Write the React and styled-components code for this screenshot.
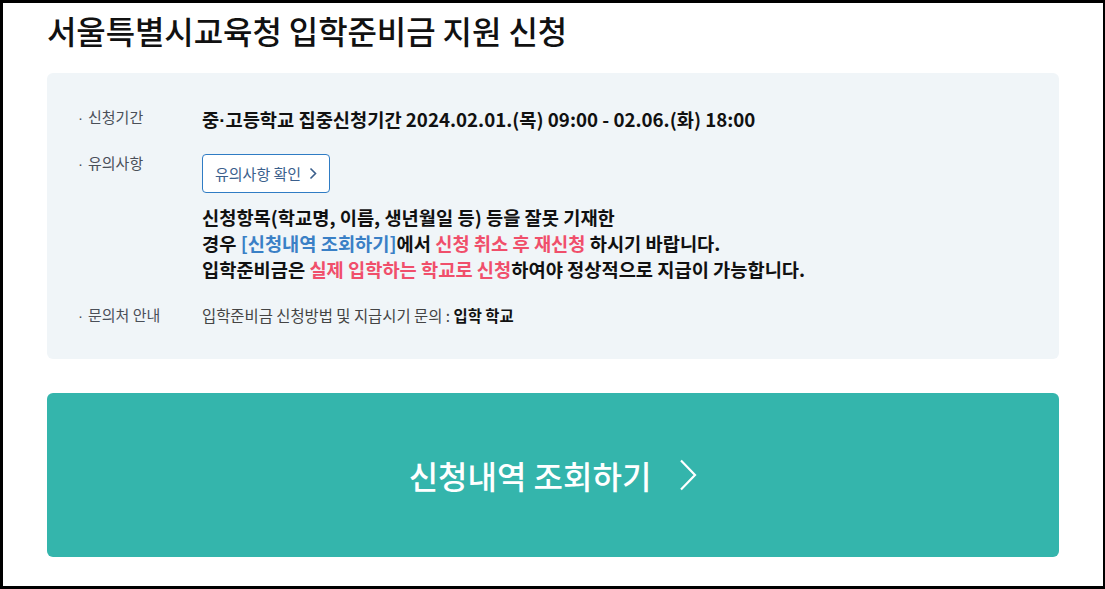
import React from "react";
import styled, { createGlobalStyle } from "styled-components";

const GlobalStyle = createGlobalStyle`
  * {
    box-sizing: border-box;
  }
  html, body {
    margin: 0;
    padding: 0;
    background: #fff;
  }
  body {
    font-family: "Noto Sans CJK KR", "Noto Sans", sans-serif;
    color: #111;
  }
`;

const rows = [
  { label: "신청기간", type: "period" },
  { label: "유의사항", type: "notice" },
  { label: "문의처 안내", type: "contact" },
];

const ChevronSmall = () => (
  <svg width="8" height="13" viewBox="0 0 8 13" fill="none">
    <polyline points="1.5,1.5 6.5,6.5 1.5,11.5" stroke="currentColor" strokeWidth="1.6" />
  </svg>
);

const ChevronLarge = () => (
  <svg width="18" height="32" viewBox="0 0 18 32" fill="none">
    <polyline points="2,1.5 16,16 2,30.5" stroke="#fff" strokeWidth="2.2" />
  </svg>
);

const renderValue = (type) => {
  if (type === "period") {
    return (
      <PeriodText>
        중<Dot>·</Dot>고등학교 집중신청기간 2024.02.01.(목) 09:00 - 02.06.(화) 18:00
      </PeriodText>
    );
  }
  if (type === "notice") {
    return (
      <>
        <NoticeButton type="button">
          유의사항 확인
          <ChevronSmall />
        </NoticeButton>
        <NoticeText>
          신청항목(학교명, 이름, 생년월일 등) 등을 잘못 기재한
          <br />
          경우 <Accent $tone="blue">[신청내역 조회하기]</Accent>에서{" "}
          <Accent $tone="red">신청 취소 후 재신청</Accent> 하시기 바랍니다.
          <br />
          입학준비금은 <Accent $tone="red">실제 입학하는 학교로 신청</Accent>하여야 정상적으로 지급이 가능합니다.
        </NoticeText>
      </>
    );
  }
  return (
    <ContactText>
      입학준비금 신청방법 및 지급시기 문의 : <strong>입학 학교</strong>
    </ContactText>
  );
};

export default function App() {
  return (
    <>
      <GlobalStyle />
      <Frame>
        <Title>서울특별시교육청 입학준비금 지원 신청</Title>
        <InfoPanel>
          {rows.map((row) => (
            <InfoRow key={row.label} $type={row.type}>
              <Label $type={row.type}>{row.label}</Label>
              <Value>{renderValue(row.type)}</Value>
            </InfoRow>
          ))}
        </InfoPanel>
        <LookupButton type="button">
          <span>신청내역 조회하기</span>
          <ChevronLarge />
        </LookupButton>
      </Frame>
    </>
  );
}

const Frame = styled.div`
  width: 1105px;
  height: 589px;
  border: 3px solid #000;
  border-right-width: 2px;
  padding: 7px 44px 0 44px;
  display: flex;
  flex-direction: column;
  overflow: hidden;
`;

const Title = styled.h1`
  margin: 0 0 23px;
  font-size: 32px;
  line-height: 40px;
  font-weight: 500;
  color: #111;
  letter-spacing: -0.1px;
`;

const InfoPanel = styled.div`
  background: #f0f5f8;
  border-radius: 6px;
  padding: 33px 30px 34px 31px;
  display: flex;
  flex-direction: column;
  gap: 22px;
`;

const InfoRow = styled.div`
  display: grid;
  grid-template-columns: 124px 1fr;
  align-items: start;
  padding-top: ${(p) => (p.$type === "contact" ? "2px" : "0")};
`;

const Label = styled.div`
  font-size: 15px;
  line-height: 18px;
  color: #4a4f58;
  padding-top: ${(p) => (p.$type === "period" ? "2px" : "0")};

  &::before {
    content: "·";
    font-family: "Liberation Sans", sans-serif;
    margin-right: 5px;
  }
`;

const Value = styled.div`
  display: flex;
  flex-direction: column;
  align-items: flex-start;
`;

const Dot = styled.span`
  font-family: "Liberation Sans", sans-serif;
  line-height: 1;
`;

const PeriodText = styled.div`
  height: 26px;
  font-size: 18.7px;
  line-height: 26px;
  font-weight: 700;
  color: #111;
`;

const NoticeButton = styled.button`
  display: inline-flex;
  align-items: center;
  gap: 8px;
  height: 39px;
  padding: 0 12px;
  background: #fff;
  border: 1px solid #2f7cc4;
  border-radius: 4px;
  font-family: inherit;
  font-size: 15px;
  color: #3b5f8c;
  cursor: pointer;
`;

const NoticeText = styled.p`
  margin: 11px 0 0;
  font-size: 18.7px;
  line-height: 26px;
  font-weight: 700;
  color: #111;
`;

const Accent = styled.span`
  color: ${(p) => (p.$tone === "blue" ? "#3a80c6" : "#f04f6b")};
`;

const ContactText = styled.div`
  font-size: 15.4px;
  line-height: 18px;
  color: #444;

  strong {
    color: #111;
    font-weight: 700;
  }
`;

const LookupButton = styled.button`
  margin-top: 34px;
  height: 164px;
  width: 100%;
  border: none;
  border-radius: 6px;
  background: #34b5ac;
  color: #fff;
  font-family: inherit;
  font-size: 32px;
  font-weight: 500;
  display: flex;
  align-items: center;
  justify-content: center;
  gap: 28px;
  cursor: pointer;
`;
